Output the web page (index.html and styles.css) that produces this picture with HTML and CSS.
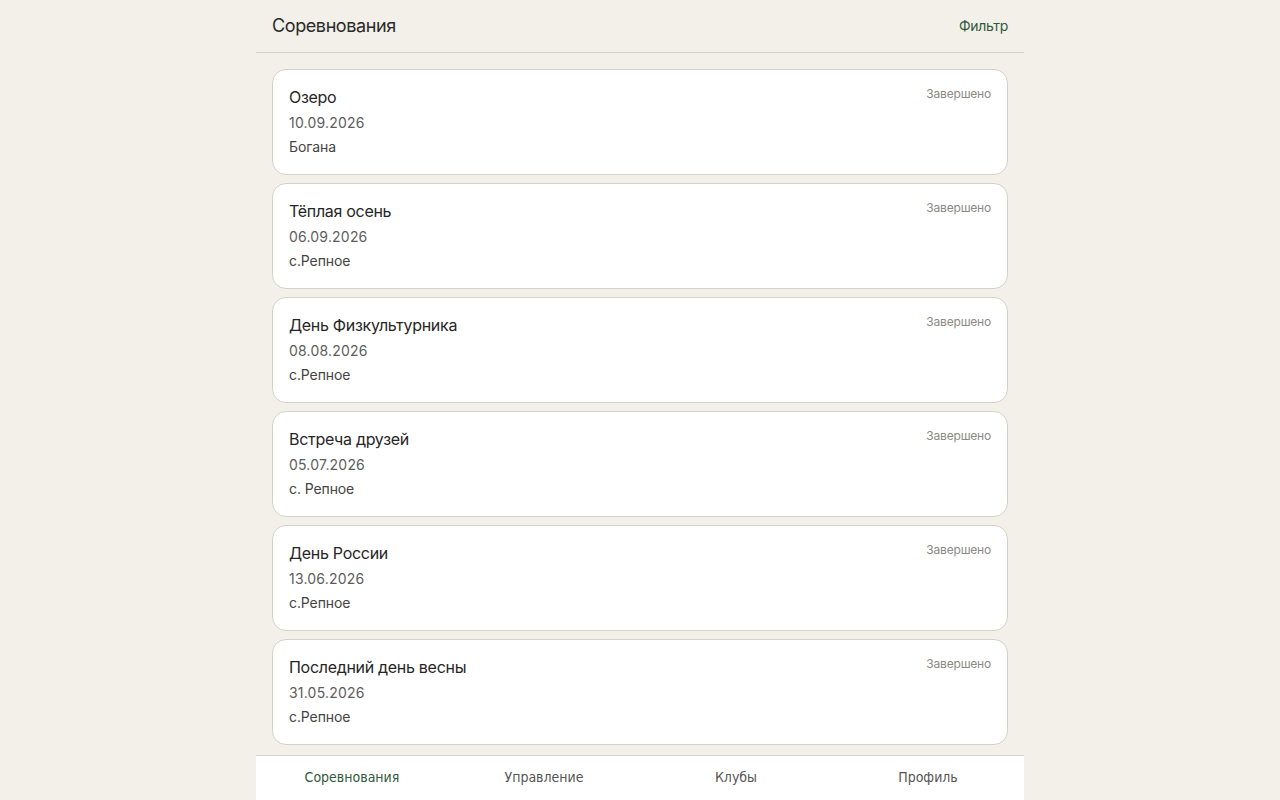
FILE: index.html
```html
<!DOCTYPE html>
<html lang="ru">
<head>
<meta charset="utf-8">
<title>Соревнования</title>
<link rel="stylesheet" href="styles.css">
</head>
<body>
<div class="app">
  <header class="topbar">
    <h1 class="title">Соревнования</h1>
    <a class="filter" href="#">Фильтр</a>
  </header>
  <main class="list">
    <article class="card">
      <div class="card-info">
        <div class="card-name">Озеро</div>
        <div class="card-date">10.09.2026</div>
        <div class="card-place">Богана</div>
      </div>
      <div class="card-status">Завершено</div>
    </article>
    <article class="card">
      <div class="card-info">
        <div class="card-name">Тёплая осень</div>
        <div class="card-date">06.09.2026</div>
        <div class="card-place">с.Репное</div>
      </div>
      <div class="card-status">Завершено</div>
    </article>
    <article class="card">
      <div class="card-info">
        <div class="card-name">День Физкультурника</div>
        <div class="card-date">08.08.2026</div>
        <div class="card-place">с.Репное</div>
      </div>
      <div class="card-status">Завершено</div>
    </article>
    <article class="card">
      <div class="card-info">
        <div class="card-name">Встреча друзей</div>
        <div class="card-date">05.07.2026</div>
        <div class="card-place">с. Репное</div>
      </div>
      <div class="card-status">Завершено</div>
    </article>
    <article class="card">
      <div class="card-info">
        <div class="card-name">День России</div>
        <div class="card-date">13.06.2026</div>
        <div class="card-place">с.Репное</div>
      </div>
      <div class="card-status">Завершено</div>
    </article>
    <article class="card">
      <div class="card-info">
        <div class="card-name">Последний день весны</div>
        <div class="card-date">31.05.2026</div>
        <div class="card-place">с.Репное</div>
      </div>
      <div class="card-status">Завершено</div>
    </article>
  </main>
  <nav class="tabbar">
    <a class="tab active" href="#">Соревнования</a>
    <a class="tab" href="#">Управление</a>
    <a class="tab" href="#">Клубы</a>
    <a class="tab" href="#">Профиль</a>
  </nav>
</div>
</body>
</html>
```

FILE: styles.css
```css
* { box-sizing: border-box; }
html, body {
  margin: 0;
  padding: 0;
  height: 100%;
  background: #f3f0e9;
}
body {
  font-family: "Inter", "Noto Sans", sans-serif;
  color: #2b2b2b;
}
.app {
  width: 768px;
  height: 100vh;
  margin: 0 auto;
  display: flex;
  flex-direction: column;
  overflow: hidden;
}
.topbar {
  height: 53px;
  flex: 0 0 auto;
  display: flex;
  align-items: center;
  justify-content: space-between;
  padding: 0 16px 1px 16px;
  border-bottom: 1px solid #d3d0c7;
}
.title {
  margin: 0;
  font-size: 18px;
  font-weight: 400;
  color: #2a2a2a;
  letter-spacing: -0.4px;
}
.filter {
  font-size: 14px;
  color: #2f5a3c;
  text-decoration: none;
  letter-spacing: -0.3px;
}
.list {
  flex: 1 1 auto;
  overflow: hidden;
  padding: 16px 16px 0 16px;
  display: flex;
  flex-direction: column;
  gap: 8px;
}
.card {
  flex: 0 0 auto;
  height: 106px;
  background: #ffffff;
  border: 1px solid #d5d2c9;
  border-radius: 14px;
  padding: 16px;
  display: flex;
  justify-content: space-between;
  align-items: flex-start;
}
.card-name {
  font-size: 16px;
  line-height: 22px;
  color: #262626;
  margin-bottom: 5px;
  letter-spacing: -0.3px;
}
.card-date {
  font-size: 14px;
  line-height: 20px;
  color: #5d5d5d;
  margin-bottom: 4px;
  letter-spacing: 0.2px;
}
.card-place {
  font-size: 14px;
  line-height: 20px;
  color: #444444;
  letter-spacing: -0.1px;
}
.card-status {
  font-size: 12px;
  line-height: 18px;
  color: #8a8a86;
  margin-top: -1px;
  letter-spacing: -0.2px;
}
.tabbar {
  flex: 0 0 45px;
  height: 45px;
  background: #ffffff;
  border-top: 1px solid #d8d5cc;
  display: grid;
  grid-template-columns: repeat(4, 1fr);
  align-items: center;
}
.tab {
  text-align: center;
  font-family: "Liberation Sans Narrow", "DejaVu Sans Condensed", "Roboto", sans-serif;
  font-size: 14px;
  color: #555555;
  text-decoration: none;
  padding-bottom: 3px;
}
.tab.active {
  color: #2f5a3c;
}
```
